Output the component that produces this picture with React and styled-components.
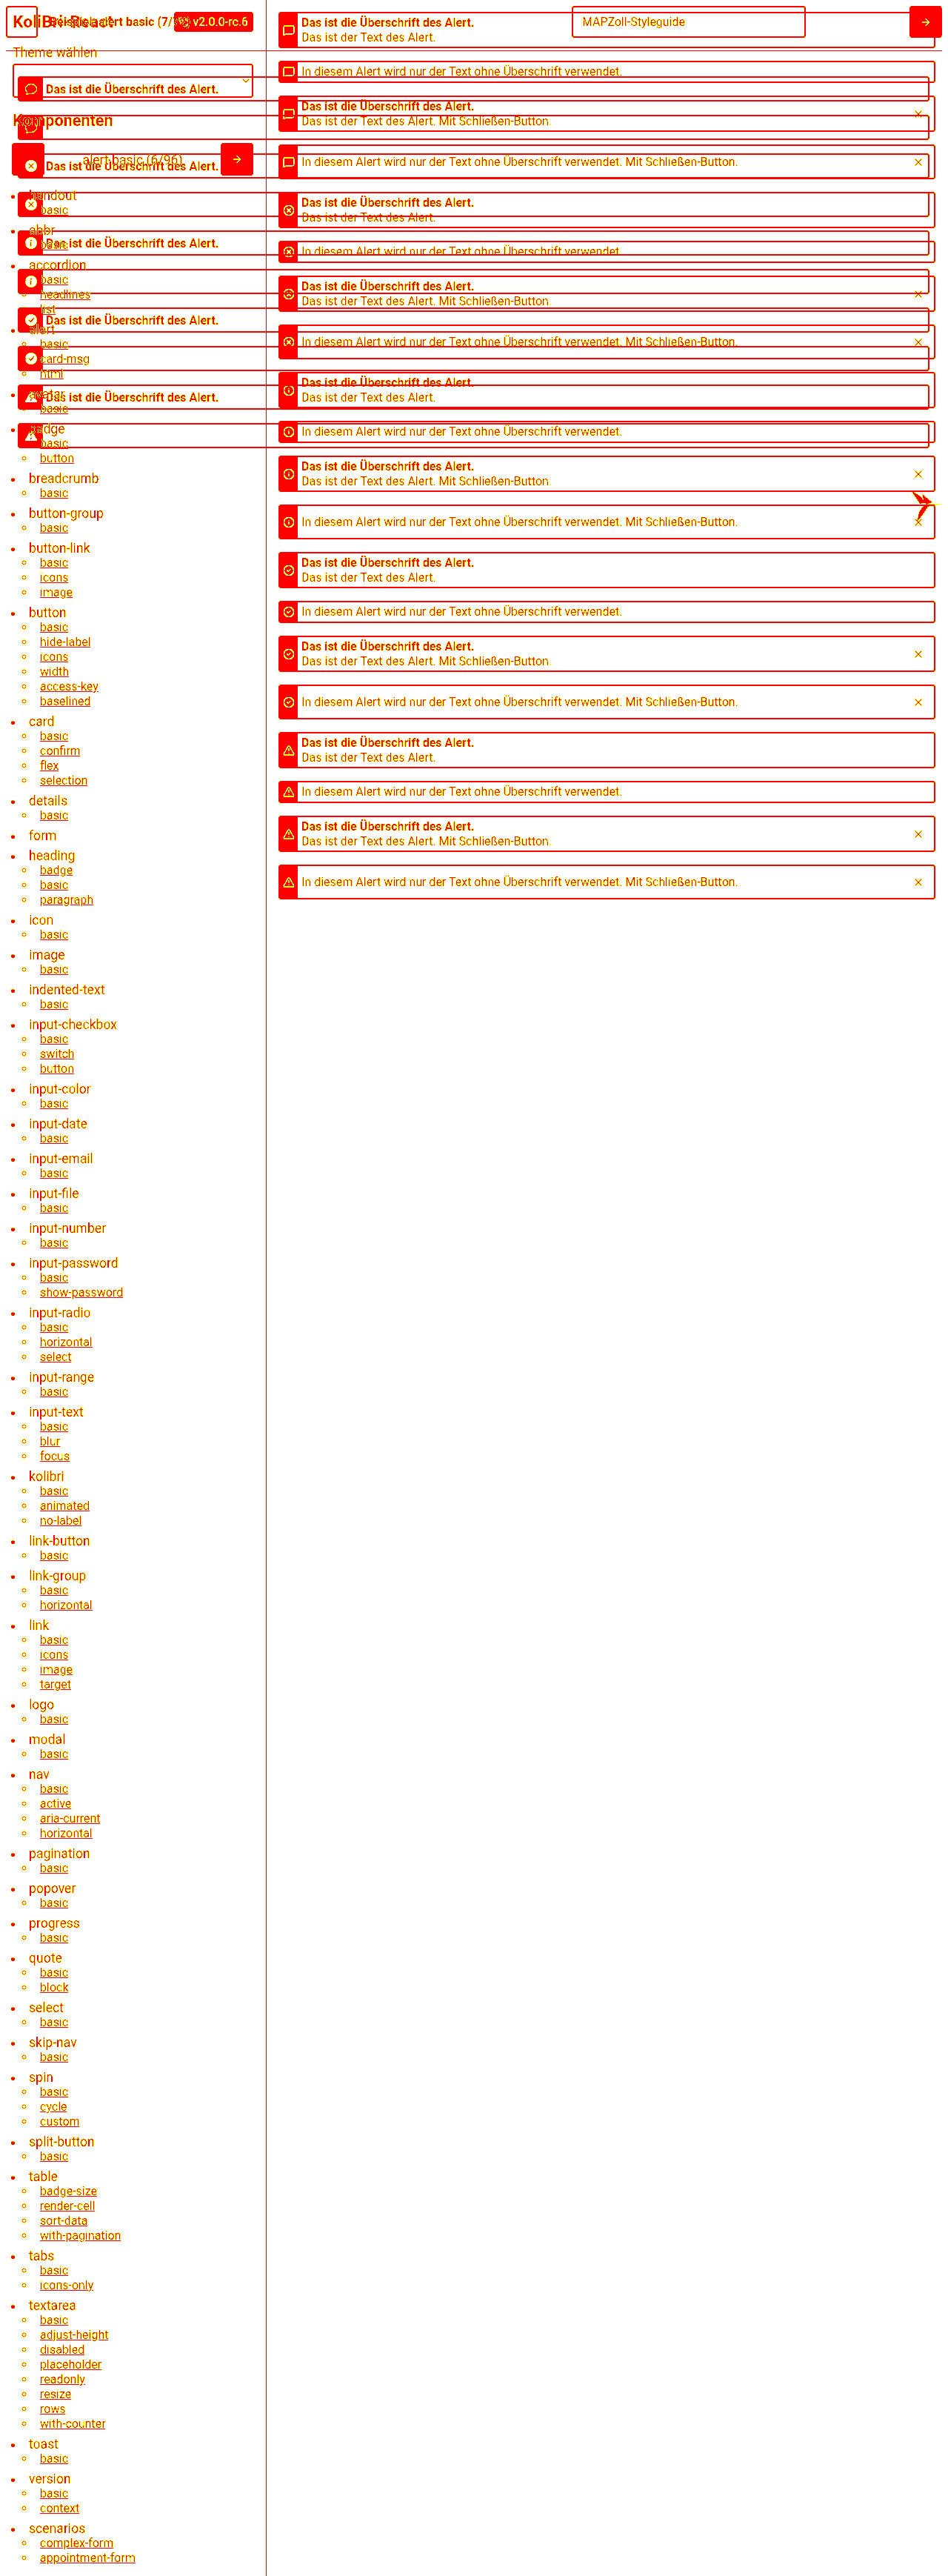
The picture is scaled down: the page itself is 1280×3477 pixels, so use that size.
import React from "react";
import styled, { createGlobalStyle } from "styled-components";
import {
  ArrowLeft,
  ArrowRight,
  ChevronDown,
  CircleCheck,
  CircleX,
  Info,
  MessageSquare,
  Tag,
  TriangleAlert,
  X,
} from "lucide-react";
import {
  BsChat,
  BsFillCheckCircleFill,
  BsFillExclamationTriangleFill,
  BsFillInfoCircleFill,
  BsFillXCircleFill,
} from "react-icons/bs";

const RED = "#ff0000";

const GlobalStyle = createGlobalStyle`
  html, body {
    margin: 0;
    padding: 0;
    background: #fff;
  }
  body {
    font-family: Roboto, "Liberation Sans", sans-serif;
    font-size: 16px;
    color: ${RED};
    text-shadow: 0 0 1px #fff, 0 0 1px #fff;
  }
`;

const FilterDefs = styled.svg`
  position: absolute;
  width: 0;
  height: 0;
`;

const Page = styled.div`
  position: relative;
  width: 1280px;
  height: 3477px;
  overflow: hidden;
  background: #fff;
  filter: url(#posterize);
`;

const Shell = styled.div`
  display: grid;
  grid-template-columns: 360px 1fr;
  height: 100%;
`;

const Sidebar = styled.aside`
  box-sizing: border-box;
  padding-top: 8px;
  border-right: 1px solid ${RED};
`;

const Brand = styled.div`
  display: flex;
  align-items: center;
  height: 43px;
  margin: 0 17px 10px 8px;
`;

const LogoBox = styled.div`
  box-sizing: border-box;
  width: 43px;
  height: 43px;
  flex: none;
  border: 2px solid ${RED};
  border-radius: 4px;
`;

const BrandTitle = styled.h1`
  margin: 0 0 0 -34px;
  font-size: 22.8px;
  line-height: 28px;
  font-weight: 700;
  white-space: nowrap;
`;

const VersionBadge = styled.span`
  display: inline-flex;
  align-items: center;
  gap: 5px;
  height: 27px;
  margin-left: auto;
  padding: 0 7px;
  border-radius: 4px;
  background: ${RED};
  color: #fff;
  font-size: 16px;
  white-space: nowrap;
  text-shadow: none;
`;

const ThemeField = styled.div`
  margin: 0 17px 17px;
`;

const ThemeLabel = styled.label`
  display: block;
  font-size: 17.6px;
  line-height: 20px;
  margin-bottom: 5px;
  font-weight: 400;
`;

const ThemeSelect = styled.div`
  box-sizing: border-box;
  display: flex;
  align-items: center;
  justify-content: flex-end;
  height: 46px;
  border: 2px solid ${RED};
  border-radius: 4px;
`;

const SectionTitle = styled.h2`
  position: relative;
  z-index: 1;
  margin: 0 17px 16px;
  font-size: 21.6px;
  line-height: 28px;
  font-weight: 700;
`;

const Pager = styled.div`
  display: flex;
  align-items: center;
  justify-content: space-between;
  margin: 0 17px 17px 16px;
`;

const PagerLabel = styled.span`
  position: relative;
  z-index: 1;
  top: 1px;
  font-size: 17.6px;
  line-height: 24px;
`;

const SquareButton = styled.button`
  display: flex;
  align-items: center;
  justify-content: center;
  width: 44px;
  height: 44px;
  padding: 0;
  border: 0;
  border-radius: 4px;
  background: ${RED};
  color: #fff;
`;

const NavList = styled.ul`
  position: relative;
  z-index: 1;
  margin: 0;
  padding: 0 0 0 32px;
  list-style: disc;
`;

const NavGroup = styled.li`
  margin-bottom: 7px;
  padding-left: 7px;
  font-size: 17.6px;
  line-height: 20px;
`;

const SubList = styled.ul`
  margin: 0;
  padding: 0 0 0 8px;
  list-style: circle;
`;

const SubItem = styled.li`
  padding-left: 7px;
  font-size: 16px;
  line-height: 20px;
`;

const SubLink = styled.a`
  color: ${RED};
  text-decoration: underline;
`;

const Main = styled.main`
  display: flex;
  flex-direction: column;
  gap: 17px;
  padding: 16px 17px 0 16px;
`;

const AlertBox = styled.div`
  box-sizing: border-box;
  display: flex;
  align-items: stretch;
  min-height: 30px;
  border: 2px solid ${RED};
  border-radius: 4px;
`;

const AlertIcon = styled.div`
  display: flex;
  align-items: center;
  justify-content: center;
  width: 24px;
  flex: none;
  background: ${RED};
  color: #fff;
`;

const AlertContent = styled.div`
  flex: 1;
  align-self: center;
  padding: 3px 5px;
  line-height: 19.5px;
`;

const AlertHeading = styled.div`
  font-weight: 700;
`;

const CloseButton = styled.button`
  display: flex;
  align-items: center;
  justify-content: center;
  flex: none;
  width: 43px;
  height: 43px;
  align-self: center;
  padding: 0;
  border: 0;
  background: transparent;
  color: ${RED};
`;

const TopBar = styled.header`
  position: absolute;
  z-index: 1;
  top: 0;
  left: 8px;
  right: 8px;
  box-sizing: border-box;
  display: flex;
  align-items: center;
  height: 69px;
  padding: 8px 0 17px 59px;
  border-bottom: 1px solid ${RED};
`;

const ExampleTitle = styled.span`
  width: 705px;
  font-weight: 700;
  white-space: nowrap;
`;

const StyleguideLink = styled.a`
  box-sizing: border-box;
  display: flex;
  align-items: center;
  width: 316px;
  height: 43px;
  padding-left: 12px;
  border: 2px solid ${RED};
  border-radius: 4px;
`;

const TopBarAction = styled(SquareButton)`
  margin-left: auto;
  height: 43px;
`;

const ToastStack = styled.div`
  position: absolute;
  top: 103px;
  left: 24px;
  width: 1231px;
  display: flex;
  flex-direction: column;
  gap: 18px;
`;

const ToastBox = styled.div`
  box-sizing: border-box;
  display: flex;
  align-items: center;
  height: 34px;
  border: 2px solid ${RED};
  border-radius: 4px;
`;

const ToastIcon = styled.div`
  display: flex;
  align-items: center;
  justify-content: center;
  align-self: stretch;
  width: 32px;
  flex: none;
  background: ${RED};
  color: #fff;
`;

const ToastText = styled.div`
  padding-left: 4px;
  font-weight: 700;
`;

const Hummingbird = styled.svg`
  position: absolute;
  left: 1229px;
  top: 660px;
  width: 46px;
  height: 52px;
`;

const NAV = [
  ["handout", ["basic"]],
  ["abbr", ["basic"]],
  ["accordion", ["basic", "headlines", "list"]],
  ["alert", ["basic", "card-msg", "html"]],
  ["avatar", ["basic"]],
  ["badge", ["basic", "button"]],
  ["breadcrumb", ["basic"]],
  ["button-group", ["basic"]],
  ["button-link", ["basic", "icons", "image"]],
  ["button", ["basic", "hide-label", "icons", "width", "access-key", "baselined"]],
  ["card", ["basic", "confirm", "flex", "selection"]],
  ["details", ["basic"]],
  ["form", []],
  ["heading", ["badge", "basic", "paragraph"]],
  ["icon", ["basic"]],
  ["image", ["basic"]],
  ["indented-text", ["basic"]],
  ["input-checkbox", ["basic", "switch", "button"]],
  ["input-color", ["basic"]],
  ["input-date", ["basic"]],
  ["input-email", ["basic"]],
  ["input-file", ["basic"]],
  ["input-number", ["basic"]],
  ["input-password", ["basic", "show-password"]],
  ["input-radio", ["basic", "horizontal", "select"]],
  ["input-range", ["basic"]],
  ["input-text", ["basic", "blur", "focus"]],
  ["kolibri", ["basic", "animated", "no-label"]],
  ["link-button", ["basic"]],
  ["link-group", ["basic", "horizontal"]],
  ["link", ["basic", "icons", "image", "target"]],
  ["logo", ["basic"]],
  ["modal", ["basic"]],
  ["nav", ["basic", "active", "aria-current", "horizontal"]],
  ["pagination", ["basic"]],
  ["popover", ["basic"]],
  ["progress", ["basic"]],
  ["quote", ["basic", "block"]],
  ["select", ["basic"]],
  ["skip-nav", ["basic"]],
  ["spin", ["basic", "cycle", "custom"]],
  ["split-button", ["basic"]],
  ["table", ["badge-size", "render-cell", "sort-data", "with-pagination"]],
  ["tabs", ["basic", "icons-only"]],
  ["textarea", ["basic", "adjust-height", "disabled", "placeholder", "readonly", "resize", "rows", "with-counter"]],
  ["toast", ["basic"]],
  ["version", ["basic", "context"]],
  ["scenarios", ["complex-form", "appointment-form"]],
];

const ALERT_ICONS = [MessageSquare, CircleX, Info, CircleCheck, TriangleAlert];
const TOAST_ICONS = [
  BsChat,
  BsFillXCircleFill,
  BsFillInfoCircleFill,
  BsFillCheckCircleFill,
  BsFillExclamationTriangleFill,
];

const HEADING = "Das ist die Überschrift des Alert.";
const VARIANTS = [
  { heading: true, text: "Das ist der Text des Alert." },
  { text: "In diesem Alert wird nur der Text ohne Überschrift verwendet." },
  { heading: true, close: true, text: "Das ist der Text des Alert. Mit Schließen-Button." },
  { close: true, text: "In diesem Alert wird nur der Text ohne Überschrift verwendet. Mit Schließen-Button." },
];

function Alert({ icon: Icon, heading, text, close }) {
  return (
    <AlertBox>
      <AlertIcon>
        <Icon size={16} />
      </AlertIcon>
      <AlertContent>
        {heading && <AlertHeading>{HEADING}</AlertHeading>}
        <div>{text}</div>
      </AlertContent>
      {close && (
        <CloseButton aria-label="Schließen">
          <X size={16} strokeWidth={2.5} />
        </CloseButton>
      )}
    </AlertBox>
  );
}

function Toast({ icon: Icon, heading }) {
  return (
    <ToastBox>
      <ToastIcon>
        <Icon size={16} />
      </ToastIcon>
      {heading && <ToastText>{HEADING}</ToastText>}
    </ToastBox>
  );
}

export default function App() {
  return (
    <>
      <GlobalStyle />
      <FilterDefs aria-hidden="true">
        <filter id="posterize" colorInterpolationFilters="sRGB" x="0" y="0" width="100%" height="100%">
          <feComponentTransfer>
            <feFuncR type="discrete" tableValues="1" />
            <feFuncG type="discrete" tableValues="0 0 0 0 0 1 1 1 1 1 1 1 1 1 1 1 1 1 1 1" />
            <feFuncB type="discrete" tableValues="0 0 0 0 0 0 0 0 0 0 0 0 0 0 0 0 0 0 0 1" />
          </feComponentTransfer>
        </filter>
      </FilterDefs>
      <Page>
        <Shell>
          <Sidebar>
            <Brand>
              <LogoBox />
              <BrandTitle>KoliBri-React</BrandTitle>
              <VersionBadge>
                <Tag size={14} />
                v2.0.0-rc.6
              </VersionBadge>
            </Brand>
            <ThemeField>
              <ThemeLabel>Theme wählen</ThemeLabel>
              <ThemeSelect>
                <ChevronDown size={16} />
              </ThemeSelect>
            </ThemeField>
            <SectionTitle>Komponenten</SectionTitle>
            <Pager>
              <SquareButton aria-label="Zurück">
                <ArrowLeft size={16} />
              </SquareButton>
              <PagerLabel>alert basic (6/96)</PagerLabel>
              <SquareButton aria-label="Weiter">
                <ArrowRight size={16} />
              </SquareButton>
            </Pager>
            <NavList>
              {NAV.map(([name, items]) => (
                <NavGroup key={name}>
                  {name}
                  {items.length > 0 && (
                    <SubList>
                      {items.map((item) => (
                        <SubItem key={item}>
                          <SubLink href="#">{item}</SubLink>
                        </SubItem>
                      ))}
                    </SubList>
                  )}
                </NavGroup>
              ))}
            </NavList>
          </Sidebar>
          <Main>
            {ALERT_ICONS.map((Icon, i) =>
              VARIANTS.map((variant, j) => <Alert key={`${i}-${j}`} icon={Icon} {...variant} />)
            )}
          </Main>
        </Shell>
        <TopBar>
          <ExampleTitle>Beispiel: alert basic (7/72)</ExampleTitle>
          <StyleguideLink>MAPZoll-Styleguide</StyleguideLink>
          <TopBarAction aria-label="Öffnen">
            <ArrowRight size={16} />
          </TopBarAction>
        </TopBar>
        <ToastStack>
          {TOAST_ICONS.map((Icon, i) => (
            <React.Fragment key={i}>
              <Toast icon={Icon} heading />
              <Toast icon={Icon} />
            </React.Fragment>
          ))}
        </ToastStack>
        <Hummingbird viewBox="0 0 46 52" aria-hidden="true">
          <path d="M1 2 L14 10 L21 19 L13 20 Z" fill={RED} />
          <path d="M16 6 L21 11 L30 18 L22 21 L18 15 Z" fill={RED} />
          <path d="M21 21 L44 20 L30 22 L24 24 L16 36 L9 44 L12 31 L17 24 Z" fill={RED} />
        </Hummingbird>
      </Page>
    </>
  );
}
